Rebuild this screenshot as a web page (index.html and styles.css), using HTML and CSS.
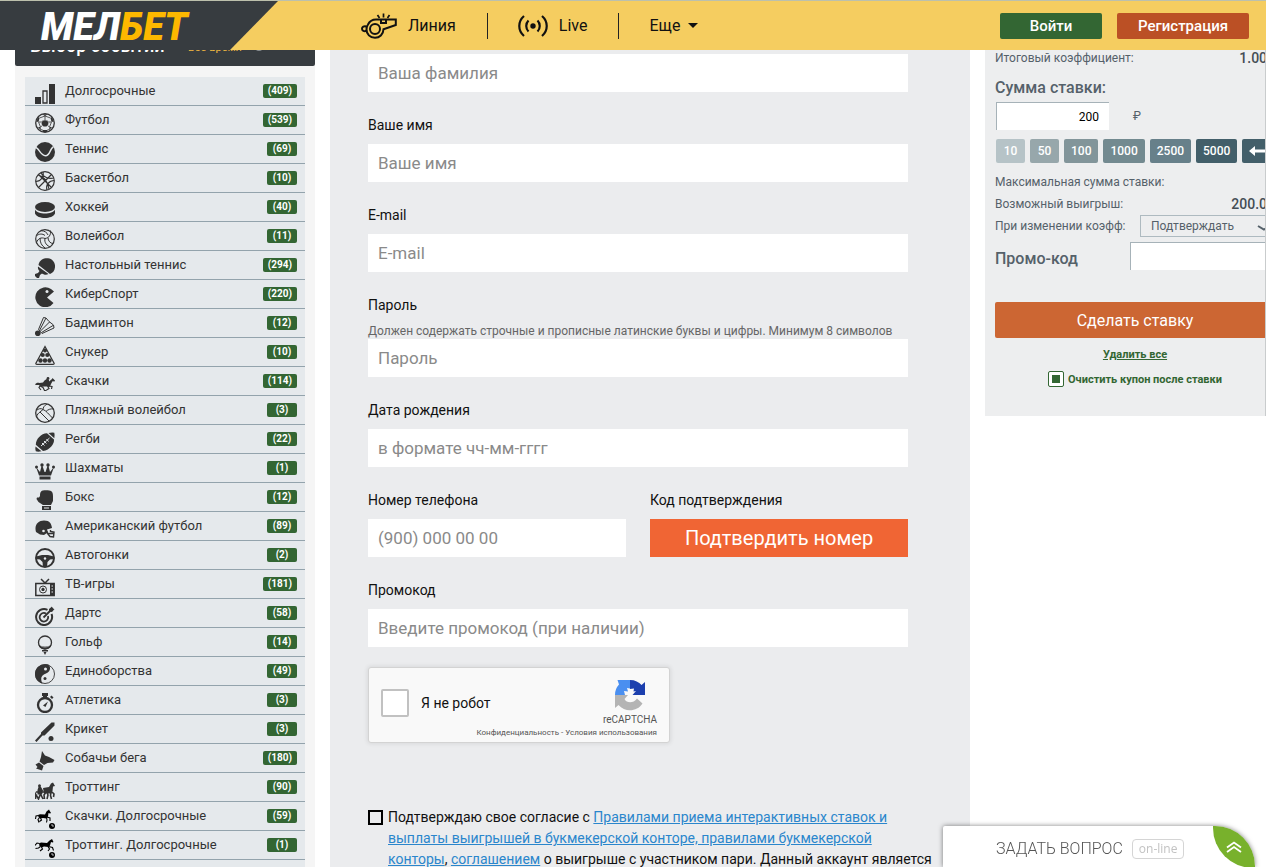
FILE: index.html
```html
<!DOCTYPE html>
<html lang="ru">
<head>
<meta charset="utf-8">
<title>Мелбет</title>
<link rel="stylesheet" href="styles.css">
</head>
<body>
<header class="topbar">
  <a class="logo" href="#"><span class="logo-text">МЕЛ<b>БЕТ</b></span></a>
  <nav class="nav">
    <a class="nav-item" href="#">
      <svg class="whistle" viewBox="0 0 36 26" fill="none" stroke="currentColor" stroke-width="2"><path d="M7 11.5C8.500 8.500 11.500 6.500 15 6.500H34.800V12L22.500 16.200C22.300 21.500 18.500 24.800 14 24.800C9 24.800 5.500 21 5.500 16.500C5.500 14.500 6 12.800 7 11.500Z"/><circle cx="14" cy="16" r="5"/><path d="M5.500 13.500C3 12.500 1 14 1 15.700C1 17.500 3 18.800 5.500 17.800M20 7V10H25V7"/><path d="M22.500 4.500V.5M18.500 5L16.500 2M26.500 5L28.500 2" stroke-width="1.700"/></svg>
      <span>Линия</span>
    </a>
    <a class="nav-item" href="#">
      <svg class="live" viewBox="0 0 30 22" fill="none" stroke="currentColor" stroke-width="2.200"><circle cx="15" cy="11" r="2.700" fill="currentColor" stroke="none"/><path d="M10.500 5.500C7.500 8.500 7.500 13.500 10.500 16.500M19.500 5.500C22.500 8.500 22.500 13.500 19.500 16.500M6 1C-.3 6.500 -.3 15.500 6 21M24 1C30.300 6.500 30.300 15.500 24 21"/></svg>
      <span>Live</span>
    </a>
    <a class="nav-item more" href="#"><span>Еще</span><i class="caret"></i></a>
  </nav>
  <div class="auth">
    <button class="btn-login" type="button">Войти</button>
    <button class="btn-reg" type="button">Регистрация</button>
  </div>
</header>

<div class="page">
  <aside class="sidebar">
    <div class="side-head"><h2>Выбор событий</h2><a href="#">Все время</a><i class="dot"></i></div>
    <ul class="sports">
      <li><a href="#"><svg viewBox="0 0 20 20"><path d="M0 13h6v7H0zM14 0h6v20h-6z"/><path d="M8 7h4v12H8z" fill="none" stroke="currentColor" stroke-width="1.300"/></svg><span>Долгосрочные</span><b>(409)</b></a></li>
      <li><a href="#"><svg viewBox="0 0 20 20"><circle cx="10" cy="10" r="9.300" fill="none" stroke="currentColor" stroke-width="1.300"/><path d="M7.500 7.500h5l1 3.500-2 2.500h-3l-2-2.500zM7 1.300 10 3l3-1.700zM1 8.500l2.500.5L4.500 5 3.500 4zM19 8.500l-2.500.5L15.500 5l1-1zM3 14l2.500 0 .5 3.500zM17 14l-2.500 0-.5 3.500zM8 17h4l.5 2h-5z"/><path d="M10 3v5M4 9l3 0M16 9l-3 0M5.500 14l2-1.500M14.500 14l-2-1.500M4.500 5 10 3l5.500 2M3.500 9l2 5M16.500 9l-2 5M6 16.500l2.500 1M14 16.500l-2.500 1" fill="none" stroke="currentColor" stroke-width=".8"/></svg><span>Футбол</span><b>(539)</b></a></li>
      <li><a href="#"><svg viewBox="0 0 20 20"><circle cx="10" cy="10" r="10"/><path d="M.5 5.500C4 5.500 5 13.500 10.500 13.700C15.500 13.700 15 5.500 18.500 5" fill="none" stroke="#e5e9ec" stroke-width="1.400"/></svg><span>Теннис</span><b>(69)</b></a></li>
      <li><a href="#"><svg viewBox="0 0 20 20" fill="none" stroke="currentColor" stroke-width="1.200"><circle cx="10" cy="10" r="9.300"/><path d="M3.500 3.500l13 13M16.500 3.500l-13 13M8 1C9.500 5 6 10.500 .8 10.500M12 19C10.500 14 14 9.500 19.200 9.500M3 4c5 1 9.500 5.500 11 14M6 2c2 4 8 6.500 13 5"/></svg><span>Баскетбол</span><b>(10)</b></a></li>
      <li><a href="#"><svg viewBox="0 0 20 20"><ellipse cx="10" cy="7" rx="10" ry="5"/><path d="M0 9.500C2.500 14.800 17.500 14.800 20 9.500V13.500C17.500 19.500 2.500 19.500 0 13.500z"/></svg><span>Хоккей</span><b>(40)</b></a></li>
      <li><a href="#"><svg viewBox="0 0 20 20" fill="none" stroke="currentColor" stroke-width="1"><circle cx="10" cy="10" r="9.300" stroke-width="1.200"/><path d="M10 9.500C6 8 3 9.500 1.500 13.500M10 9.500c4-.5 6-3.500 5.500-8M10 9.500c-1 4 2 7.500 5.500 8.500M1.500 7C4 4.500 7.500 4.500 10 6.500M6 1.700c3.500 0 6 1.800 7 4.300M13 8.500c0 3.500 2.500 6 5 6M5 9c0 4.500 1.500 7.500 5 10"/></svg><span>Волейбол</span><b>(11)</b></a></li>
      <li><a href="#"><svg viewBox="0 0 20 20"><path d="M3.500 7C4.500 1.500 9 0 13 .3c5 .5 7.500 5 7 9-.3 3.500-2.500 6-5 6.700z"/><path d="M3 8.500 13.500 16C11 17.500 8.500 16.500 7 15.500L5 17l-1 3H2l-2-2v-2l3-1 1.500-2C3 11.500 2.700 10 3 8.500z"/></svg><span>Настольный теннис</span><b>(294)</b></a></li>
      <li><a href="#"><svg viewBox="0 0 20 20"><path d="M19 4.500 12 10.500 18.500 16A10 10 0 1 1 16 2z"/><circle cx="12" cy="4.500" r="1.500" fill="#e5e9ec"/></svg><span>КиберСпорт</span><b>(220)</b></a></li>
      <li><a href="#"><svg viewBox="0 0 20 20"><circle cx="2.800" cy="17.200" r="2.800"/><path d="M3.500 13.500 8.500 1.500 11 2 14 5.500 18.500 9 19 12 7 17.500zM4.500 14.500 11 2M5.500 15 14.500 6M6.500 16.500 18 9.500" fill="none" stroke="currentColor"/></svg><span>Бадминтон</span><b>(12)</b></a></li>
      <li><a href="#"><svg viewBox="0 0 20 20"><path d="M10 1.500 .8 18.500q0 .8 1 .8h16.400q1 0 1-.8z" fill="none" stroke="currentColor" stroke-width="1.200"/><circle cx="10" cy="5.500" r="2"/><circle cx="7.700" cy="10" r="2.100"/><circle cx="12.300" cy="10" r="2.100"/><circle cx="5.500" cy="15.500" r="2.200"/><circle cx="10" cy="15.500" r="2.200"/><circle cx="14.500" cy="15.500" r="2.200"/></svg><span>Снукер</span><b>(10)</b></a></li>
      <li><a href="#"><svg viewBox="0 0 20 20"><path d="M0 10.500C1 9 2.500 8.500 4.500 9L8 8.500 9.500 6.500 12 4.800 14 6l0 1.500L17 5l.5-1L20 6.500l-.5 1-2-.3L16 10l-1 2.500H9L5.500 13 4 11 1 11z"/><path d="M5 12 4 13.500l2 2.500M6 12.500l2 1 1.500 3h2M13 12l4 .5-.5 2.500M12.500 12l1.500 2.500-2.500 1.500" fill="none" stroke="currentColor" stroke-width="1.200"/><circle cx="13" cy="4.500" r="1.400"/></svg><span>Скачки</span><b>(114)</b></a></li>
      <li><a href="#"><svg viewBox="0 0 20 20" fill="none" stroke="currentColor" stroke-width="1"><circle cx="10" cy="10" r="9.300" stroke-width="1.300"/><path d="M8 6.500c3 1 6 5 9.500 8.500M8 6.500C6 5 3.500 5.500 1.500 7.500M5 9l9 9M5 9C3.500 10 2 11.500 1.500 14M5 9l3-2.500M8 6.500C8 4.500 9.500 2.500 12 1M11 8.500c2-2 4.500-3 7.500-2.500"/></svg><span>Пляжный волейбол</span><b>(3)</b></a></li>
      <li><a href="#"><svg viewBox="0 0 20 20"><path d="M12 1.300 19 7.500C19.500 12 15 18 8 19L.8 12.800C1 7 6 1.500 12 1.300zM13.500 1 Q17 .2 19.300 .7 20 3 19.300 6.300zM.5 14.500 6.500 19.300Q3 20 .8 19.300 0 17 .5 14.500z"/><path d="M6 14 14.500 6M7 11l2.500 2.500M9 9l2.500 2.500M11.500 7l2 2.500" stroke="#e5e9ec"/></svg><span>Регби</span><b>(22)</b></a></li>
      <li><a href="#"><svg viewBox="0 0 20 20"><circle cx="1.500" cy="6" r="1.500"/><circle cx="7" cy="4" r="1.700"/><circle cx="13" cy="4" r="1.700"/><circle cx="18.500" cy="6" r="1.500"/><path d="M1 6l4 5 1.500-6h1L9.500 11h1L12.500 5h1L15 11l4-5-3 8.500H4zM4.500 15.500h11V18.500h-11z"/></svg><span>Шахматы</span><b>(1)</b></a></li>
      <li><a href="#"><svg viewBox="0 0 20 20"><path d="M5 6C5 1.500 6 .3 11 .3S18 1 18 6v5l-2 4H8L3.500 12 1.500 9 2 7.500 4 7.500zM7 16h9v4H7z"/><path d="M9 18h5" fill="none" stroke="#e5e9ec" stroke-width="1"/></svg><span>Бокс</span><b>(12)</b></a></li>
      <li><a href="#"><svg viewBox="0 0 20 20"><path d="M1 13C-1 6 3 1.500 9 1.500S16.500 5 17 9L12 10.500V14L9 16 5 15.500z"/><path d="M12 11.500 12.500 14.500l2.500 3 3.500.5.5-5-3.500-.5v-1.500M12.500 14.500h6" fill="none" stroke="currentColor" stroke-width="1.400"/><circle cx="8.500" cy="12" r="1.300" fill="#e5e9ec"/></svg><span>Американский футбол</span><b>(89)</b></a></li>
      <li><a href="#"><svg viewBox="0 0 20 20"><circle cx="10" cy="10" r="9" fill="none" stroke="currentColor" stroke-width="2"/><path d="M1 8.500 7 7h6l6 1.500V11l-4 .5-2.500 2.500-.5 5H8l-.5-5L5 11.500 1 11z"/><circle cx="10" cy="10.500" r="1.200" fill="#e5e9ec"/></svg><span>Автогонки</span><b>(2)</b></a></li>
      <li><a href="#"><svg viewBox="0 0 20 20"><path d="M.8 6.500h18.400v12H.8zM6 2l4 4 4-4" fill="none" stroke="currentColor" stroke-width="1.500"/><path d="M15 7h4v11h-4z"/><circle cx="8" cy="12.500" r="3.500" fill="none" stroke="currentColor"/><path d="M8 10.500l1.800 1.400-.7 2.100H6.900l-.7-2.100z"/><path d="M16.500 9h1.500M16.500 12h1.500M16.500 15h1.500" stroke="#e5e9ec"/></svg><span>ТВ-игры</span><b>(181)</b></a></li>
      <li><a href="#"><svg viewBox="0 0 20 20" fill="none" stroke="currentColor"><path d="M12.500 3.800A8 8 0 1 0 16.500 8" stroke-width="2"/><path d="M11 7.500A4.300 4.300 0 1 0 13 10" stroke-width="1.800"/><path d="M8.500 11.500 18 2" stroke-width="1.800"/><path d="M14 5.500V3L17 .5V3h2.500L17 6z" fill="currentColor" stroke="none"/></svg><span>Дартс</span><b>(58)</b></a></li>
      <li><a href="#"><svg viewBox="0 0 20 20"><circle cx="10" cy="7.500" r="6.500" fill="none" stroke="currentColor" stroke-width="1.300"/><path d="M3.500 9.500c3 2.500 10 2.500 13 0-1 6.500-12 6.500-13 0zM7 15h6v1.500H7zM8.500 17h3L10 20z"/><path d="M5.500 10.500c2 2 7 2 9 0" fill="none" stroke="#e5e9ec" stroke-width=".6"/></svg><span>Гольф</span><b>(14)</b></a></li>
      <li><a href="#"><svg viewBox="0 0 20 20"><circle cx="10" cy="10" r="9.500" fill="none" stroke="currentColor" stroke-width=".9"/><path d="M13 .5C16 2 16 8 11 9.500S5 15 7.500 19.500C3 18.500 0 15 0 10 0 4 5-.8 13 .5z"/><circle cx="10.500" cy="5" r="1.500" fill="#e5e9ec"/><circle cx="10" cy="14.500" r="1.500"/></svg><span>Единоборства</span><b>(49)</b></a></li>
      <li><a href="#"><svg viewBox="0 0 20 20"><circle cx="10" cy="12" r="7" fill="none" stroke="currentColor" stroke-width="2.300"/><path d="M7 0h6v3h-1v2H8V3H7zM15 4l1.500-1.500 2 2L17 6zM8 12.500l5-4-2.500 5.500z"/></svg><span>Атлетика</span><b>(3)</b></a></li>
      <li><a href="#"><svg viewBox="0 0 20 20"><path d="M16.500 .5 19.500 .5 19.500 3.500 9.500 13.500 7.500 13.500 1.500 20 0 18.500 6 12V10.500z"/><circle cx="16" cy="16.500" r="2.500"/></svg><span>Крикет</span><b>(3)</b></a></li>
      <li><a href="#"><svg viewBox="0 0 20 20"><path d="M6 6 7 0l3 4.500 4 1.500 5.500 3L18 11.500 12.500 12 9 14 4.500 10.500zM4 11.500 8.500 15 7 19.500 1 17.500 2.500 16 .5 13.500z"/></svg><span>Собачьи бега</span><b>(180)</b></a></li>
      <li><a href="#"><svg viewBox="0 0 20 20"><path d="M8 8 14 7 16 3.500 18 2.500 20 6 18 6.500 17.500 11 16.500 13.500H9zM2.500 10 3.500 7 6 7 8 10.500l-1 4H2.500z"/><circle cx="4.500" cy="5.700" r="1.500"/><path d="M11 12l-2 3 .5 4M12 12l1 3-1 4M16 12l-.5 3.500 1 3.500M17 12l2 2-.5 3M1 12H9M.5 19V14l3 5 2-5 2.500 5" fill="none" stroke="currentColor" stroke-width="1.600"/></svg><span>Троттинг</span><b>(90)</b></a></li>
      <li><a class="dark" href="#"><svg viewBox="0 0 20 20"><path d="M3 6 5 5.300 10 5.500 11.500 2.500 14 .5 14.500 1.500 16 4 15 4.500 13.500 4 13 7.500 11.500 9.500 8 9 5 9.500 3.500 8z"/><path d="M3.500 6.500 1 7 .5 10M4.500 8.500 3 10.500 4 13.500M5.500 9 6.500 11 4.500 12.500M11.500 8.500 12 11 11.500 13.500M12 8l3 1v3" fill="none" stroke="currentColor" stroke-width="1.100"/><circle cx="17" cy="17" r="3"/><path d="M17 15v2h2" fill="none" stroke="#e5e9ec" stroke-width=".8"/></svg><span>Скачки. Долгосрочные</span><b>(59)</b></a></li>
      <li><a class="dark" href="#"><svg viewBox="0 0 20 20"><path d="M4 5.500 6 4.500 12 5 14.500 2.500 17 1 18.500 4 17.500 4.500 16 4 15 7.500 13.500 9 9 8.500 6.500 9.500 4.500 8z"/><path d="M4.500 5.500 2 5 0 7.500M5.500 8.500 3.500 10 .5 10.500M6.500 9l1 2-2.500 2M13.500 8.500l4 1 1 3M13 8.500l1.500 2.500-1.500 2" fill="none" stroke="currentColor" stroke-width="1.100"/><circle cx="17" cy="17" r="3"/><path d="M17 15v2h2" fill="none" stroke="#e5e9ec" stroke-width=".8"/></svg><span>Троттинг. Долгосрочные</span><b>(1)</b></a></li>
      <li class="rest"></li>
    </ul>
  </aside>

  <main class="content">
    <form class="form">
      <div class="field"><label for="f-last">Ваша фамилия</label><input id="f-last" type="text" placeholder="Ваша фамилия"></div>
      <div class="field"><label for="f-first">Ваше имя</label><input id="f-first" type="text" placeholder="Ваше имя"></div>
      <div class="field"><label for="f-mail">E-mail</label><input id="f-mail" type="email" placeholder="E-mail"></div>
      <div class="field with-hint"><label for="f-pass">Пароль</label><p>Должен содержать строчные и прописные латинские буквы и цифры. Минимум 8 символов</p><input id="f-pass" type="password" placeholder="Пароль"></div>
      <div class="field"><label for="f-birth">Дата рождения</label><input id="f-birth" type="text" placeholder="в формате чч-мм-гггг"></div>
      <div class="pair">
        <div class="field"><label for="f-phone">Номер телефона</label><input id="f-phone" type="tel" placeholder="(900) 000 00 00"></div>
        <div class="field"><label for="f-confirm">Код подтверждения</label><button id="f-confirm" type="button">Подтвердить номер</button></div>
      </div>
      <div class="field"><label for="f-promo">Промокод</label><input id="f-promo" type="text" placeholder="Введите промокод (при наличии)"></div>
      <div class="captcha">
        <label><input type="checkbox"><span>Я не робот</span></label>
        <div class="captcha-brand">
          <svg viewBox="0 0 32 32"><path d="M1 16A15 15 0 0 1 5 5.500L3.500 1H16V9.500L13 9 14 12.500 10 12 11 16z" fill="#4a8ff0"/><path d="M16 1C21 1 25 3 27.500 6L31 3V16H18.500L22 12 19.500 12.500 20 9.500 16 10z" fill="#1c3fae"/><path d="M1 16V29L4.500 26C11 33.500 23 33 28.500 24.500L23 19.500C19 25 12.500 24 10.500 20L14 16z" fill="#b4b4b4"/></svg>
          <span>reCAPTCHA</span>
        </div>
        <div class="captcha-legal"><a href="#">Конфиденциальность</a> - <a href="#">Условия использования</a></div>
      </div>
    </form>
    <div class="agree">
      <input id="agree" type="checkbox">
      <label for="agree">Подтверждаю свое согласие с <a href="#">Правилами приема интерактивных ставок и выплаты выигрышей в букмекерской конторе, правилами букмекерской конторы</a>, <a href="#">соглашением</a> о выигрыше с участником пари. Данный аккаунт является</label>
    </div>
  </main>

  <aside class="coupon-col">
    <form class="coupon">
      <div class="line total"><span>Итоговый коэффициент:</span><b>1.000</b></div>
      <label class="title" for="stake">Сумма ставки:</label>
      <div class="stake"><input id="stake" type="text" value="200"><span>₽</span></div>
      <div class="chips">
        <button class="c1" type="button">10</button><button class="c2" type="button">50</button><button class="c3" type="button">100</button><button class="c4" type="button">1000</button><button class="c5" type="button">2500</button><button class="c6" type="button">5000</button><button class="c6 back" type="button" aria-label="Назад"><svg viewBox="0 0 16 10"><path d="M0 5 6 0V3.500H16V6.500H6V10z"/></svg></button>
      </div>
      <div class="line"><span>Максимальная сумма ставки:</span></div>
      <div class="line"><span>Возможный выигрыш:</span><b>200.00</b></div>
      <div class="line"><label for="odds">При изменении коэфф:</label>
        <div class="select"><select id="odds"><option>Подтверждать</option></select><svg viewBox="0 0 14 6"><path d="M1 1 7 4.500 13 1" fill="none" stroke="currentColor" stroke-width="2"/></svg></div>
      </div>
      <div class="promo"><label for="promo">Промо-код</label><input id="promo" type="text"></div>
      <button class="place" type="button">Сделать ставку</button>
      <a class="clear" href="#">Удалить все</a>
      <label class="keep"><input type="checkbox" checked><span>Очистить купон после ставки</span></label>
    </form>
  </aside>
</div>

<div class="chat">
  <span class="chat-title">ЗАДАТЬ ВОПРОС</span><span class="chat-state">on-line</span>
  <button class="leaf" type="button" aria-label="Развернуть"><svg viewBox="0 0 16 12"><path d="M1 6.500 8 1.500 15 6.500M1 11 8 6 15 11" fill="none" stroke="#fff" stroke-width="1.800"/></svg></button>
</div>
</body>
</html>
```
FILE: styles.css
```css
* { box-sizing: border-box; }
body { margin: 0; background: #fff; color: #111; font-family: Roboto, "Liberation Sans", sans-serif; font-size: 14px; }
button, input, select { font-family: inherit; margin: 0; border: 0; border-radius: 0; }
a { color: inherit; text-decoration: none; }
h2, p, ul { margin: 0; padding: 0; }
svg { display: block; fill: currentColor; flex: none; }
svg[fill="none"] { fill: none; }

/* top bar */
.topbar { position: fixed; inset: 0 0 auto 0; z-index: 5; height: 50px; display: flex; align-items: center; background: #f5cd60; border-top: 1px solid #bcc0ac; }
.logo { align-self: stretch; width: 278px; padding-left: 41px; display: flex; align-items: center; background: #373c40; clip-path: polygon(0 0, 100% 0, 230px 100%, 0 100%); }
.logo-text { padding-top: 2px; font-size: 38px; font-weight: 900; font-style: italic; line-height: 46px; color: #fff; }
.logo-text b { color: #fdb800; font-weight: 900; }
.nav { flex: 1; display: flex; align-items: center; padding-left: 52px; }
.nav-item { display: flex; align-items: center; gap: 11px; height: 26px; padding: 0 31px; font-size: 16px; color: #111; }
.nav-item + .nav-item { padding-left: 30px; border-left: 1px solid #222; }
.nav-item.more { gap: 8px; }
.whistle { width: 36px; height: 26px; }
.live { width: 30px; height: 22px; }
.caret { border: 5px solid transparent; border-top-color: #111; border-bottom: 0; }
.auth { display: flex; gap: 15px; padding-right: 17px; }
.auth button { height: 26px; border-radius: 2px; color: #fff; font-size: 15px; font-weight: 500; padding: 0; }
.btn-login { width: 102px; background: #336633; }
.btn-reg { width: 132px; background: #bb5025; }

/* page */
.page { display: grid; grid-template-columns: 300px minmax(0, 1fr) 281px; gap: 15px; padding-left: 15px; height: 100vh; overflow: hidden; }

/* sidebar */
.sidebar { background: #f5f5f5; }
.side-head { margin-top: 25px; height: 41px; padding: 0 15px; display: flex; align-items: center; background: #373c40; border-radius: 0 0 2px 2px; }
.side-head h2 { color: #fff; font-size: 18px; font-weight: 500; width: 158px; white-space: nowrap; }
.side-head a { color: #f0b840; font-size: 11px; line-height: 16px; padding-top: 4px; }
.dot { width: 8px; height: 8px; margin: 2px 0 0 13px; border: 2px solid #8a9094; border-radius: 50%; }
.sports { list-style: none; margin: 11px 10px 0; }
.sports a { display: flex; align-items: flex-start; height: 29px; padding: 0 8px 0 10px; background: #e5e9ec; border-bottom: 1px solid #93a3ac; color: #333; }
.sports .rest { height: 29px; background: #e5e9ec; }
.sports svg { width: 20px; height: 20px; margin-top: 7px; }
.sports .dark svg { color: #000; }
.sports span { flex: 1; padding-left: 10px; font-size: 13px; line-height: 28px; white-space: nowrap; }
.sports b { min-width: 30px; margin-top: 7px; padding: 0 5px; border-radius: 2px; background: #336633; color: #fff; font-size: 10px; line-height: 14px; text-align: center; }

/* registration form */
.content { background: #ebecee; padding: 25px 38px 0; }
.form { padding-right: 24px; }
.field { margin-bottom: 23px; }
.field label { display: block; line-height: 20px; margin-bottom: 9px; color: #111; }
.field input { display: block; width: 100%; height: 38px; padding: 0 10px; background: #fff; font-size: 17px; }
.field input::placeholder { color: #8a8a8a; opacity: 1; }
.with-hint label { margin-bottom: 6px; }
.with-hint p { padding-top: 2px; font-size: 12px; line-height: 16px; color: #666; white-space: nowrap; }
.pair { display: grid; grid-template-columns: 1fr 1fr; gap: 24px; }
.pair button { width: 100%; height: 38px; background: #f06534; color: #fff; font-size: 20px; }

.captcha { width: 302px; height: 76px; margin-top: -3px; padding: 11px 12px 0; display: grid; grid-template-columns: 1fr auto; grid-template-rows: 48px auto; background: #f9f9f9; border: 1px solid #d3d3d3; border-radius: 3px; box-shadow: 0 0 4px 1px rgba(0, 0, 0, .08); }
.captcha label { display: flex; align-items: center; gap: 12px; }
.captcha input { appearance: none; width: 28px; height: 28px; border: 2px solid #c1c1c1; border-radius: 2px; background: #fff; }
.captcha-brand { display: flex; flex-direction: column; align-items: center; gap: 3px; font-size: 10px; line-height: 12px; color: #555; }
.captcha-brand svg { width: 32px; height: 32px; }
.captcha-legal { grid-column: 1 / 3; text-align: right; font-size: 8px; line-height: 12px; color: #555; }

.agree { display: flex; gap: 5px; margin-top: 64px; }
.agree input { appearance: none; flex: none; width: 15px; height: 15px; margin-top: 3px; border: 2px solid #000; }
.agree label { line-height: 21px; color: #111; }
.agree a { color: #2a86cc; text-decoration: underline; }

/* coupon */
.coupon-col { overflow: hidden; align-self: start; border-right: 1px solid #c9cccd; }
.coupon { width: 300px; height: 416px; padding: 47px 10px 0; background: #edeeef; color: #55616a; font-size: 12px; }
.line { display: flex; justify-content: space-between; align-items: center; height: 22px; }
.line b { font-size: 14px; font-weight: 500; line-height: 18px; color: #444d55; }
.title { display: block; margin-top: 9px; font-size: 16px; font-weight: 500; line-height: 20px; }
.stake { display: flex; align-items: center; gap: 24px; margin: 4px 0 9px; padding-left: 1px; }
.stake input { width: 113px; height: 28px; padding: 0 10px; text-align: right; font-size: 12px; border: solid #a6b2b8; border-width: 1px 0 0 1px; }
.chips { display: flex; gap: 5px; margin-bottom: 8px; padding-left: 1px; }
.chips button { flex: none; height: 24px; padding: 0 7px; border-radius: 2px; color: #fff; font-size: 12px; font-weight: 500; min-width: 29px; }
.c1 { background: #b6c3c7; }
.c2 { background: #97a7ab; }
.c3 { background: #82959a; }
.c4 { background: #738a90; }
.c5 { background: #67808a; }
.c6 { background: #435f6a; }
.back svg { width: 16px; height: 10px; }
.select { position: relative; width: 135px; height: 22px; }
.select select { appearance: none; width: 100%; height: 22px; padding: 0 10px; border: 1px solid #aebac0; background: transparent; font-size: 12px; color: inherit; }
.select svg { position: absolute; right: 4px; top: 10px; width: 14px; height: 6px; }
.promo { display: flex; justify-content: space-between; align-items: center; margin-top: 5px; }
.promo label { padding-top: 4px; font-size: 16px; font-weight: 500; }
.promo input { width: 145px; height: 28px; border: solid #a6b2b8; border-width: 1px 0 0 1px; }
.place { display: block; width: 100%; height: 36px; margin-top: 32px; padding: 0; border-radius: 2px; background: #cc6633; color: #fff; font-size: 16px; }
.clear, .keep { color: #336633; font-size: 11px; font-weight: 700; }
.clear { display: block; margin-top: 8px; text-align: center; line-height: 18px; text-decoration: underline; }
.keep { display: flex; justify-content: center; align-items: center; gap: 4px; margin-top: 7px; }
.keep input { appearance: none; width: 16px; height: 16px; padding: 3px; border: 1px solid #336633; border-radius: 2px; background: #336633 content-box; box-shadow: inset 0 0 0 3px #fff; }

/* chat widget */
.chat { position: fixed; right: 11px; bottom: 0; z-index: 4; width: 312px; height: 41px; padding: 4px 0 0 53px; display: flex; align-items: center; gap: 9px; background: #fff; border-radius: 2px 40px 0 0; box-shadow: 0 0 5px rgba(0, 0, 0, .5); color: #555; }
.chat-title { font-size: 16px; font-weight: 300; white-space: nowrap; }
.chat-state { padding: 0 6px; border: 1px solid #d5d5d5; border-radius: 4px; font-family: "Open Sans", sans-serif; font-size: 12px; line-height: 18px; color: #c2c2c2; }
.leaf { position: absolute; right: 0; top: 0; width: 42px; height: 42px; padding: 0 13px; background: #78b12c; border-radius: 0 40px 0 40px; }
.leaf svg { width: 16px; height: 12px; }
```
